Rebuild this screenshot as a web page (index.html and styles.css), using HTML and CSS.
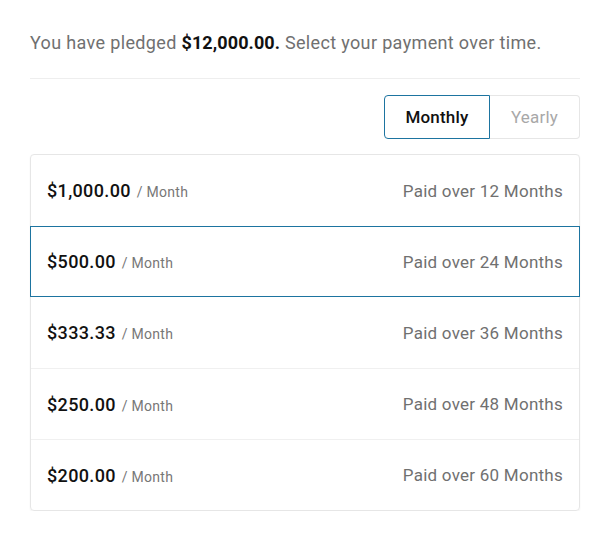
FILE: index.html
```html
<!DOCTYPE html>
<html>
<head>
<meta charset="utf-8">
<link rel="stylesheet" href="styles.css">
</head>
<body>
<div class="page">
  <p class="intro">You have pledged <strong>$12,000.00.</strong> Select your payment over time.</p>
  <hr class="divider">
  <div class="toggle-row">
    <div class="toggle">
      <button class="toggle-btn active">Monthly</button>
      <button class="toggle-btn">Yearly</button>
    </div>
  </div>
  <ul class="plans">
    <li class="plan"><span class="amount">$1,000.00 <span class="unit">/ Month</span></span><span class="term">Paid over 12 Months</span></li>
    <li class="plan selected"><span class="amount">$500.00 <span class="unit">/ Month</span></span><span class="term">Paid over 24 Months</span></li>
    <li class="plan"><span class="amount">$333.33 <span class="unit">/ Month</span></span><span class="term">Paid over 36 Months</span></li>
    <li class="plan"><span class="amount">$250.00 <span class="unit">/ Month</span></span><span class="term">Paid over 48 Months</span></li>
    <li class="plan"><span class="amount">$200.00 <span class="unit">/ Month</span></span><span class="term">Paid over 60 Months</span></li>
  </ul>
</div>
</body>
</html>
```
FILE: styles.css
```css
* { box-sizing: border-box; }
body {
  margin: 0;
  background: #fff;
  font-family: Roboto, "Noto Sans", Arial, sans-serif;
  color: #111;
}
.page {
  padding: 31px 29px 0 30px;
}
.intro {
  margin: 0;
  font-size: 18px;
  line-height: 24px;
  letter-spacing: 0.35px;
  color: #707070;
}
.intro strong {
  color: #111;
  font-weight: 700;
  letter-spacing: 0.1px;
}
.divider {
  border: 0;
  border-top: 1px solid #eeeeee;
  margin: 23px 0 16px;
}
.toggle-row {
  display: flex;
  justify-content: flex-end;
}
.toggle {
  display: flex;
  height: 44px;
}
.toggle-btn {
  display: flex;
  align-items: center;
  justify-content: center;
  font-family: inherit;
  font-size: 17px;
  letter-spacing: 0.2px;
  background: #fff;
  color: #a8a8a8;
  padding: 0;
  margin: 0;
  height: 44px;
  cursor: pointer;
  border: 1px solid #e6e6e6;
  border-left: 0;
  border-radius: 0 4px 4px 0;
  width: 90px;
}
.toggle-btn.active {
  width: 106px;
  border: 1px solid #1d74a0;
  border-radius: 4px 0 0 4px;
  color: #111;
  font-weight: 500;
}
.plans {
  list-style: none;
  margin: 15px 0 0;
  padding: 0;
  border: 1px solid #e6e6e6;
  border-radius: 4px;
  box-shadow: 0 1px 2px rgba(0,0,0,0.06);
}
.plan {
  display: flex;
  justify-content: space-between;
  align-items: center;
  height: 71px;
  padding: 0 16px;
  border-top: 1px solid #f0f0f0;
}
.plan:first-child { border-top: 0; }
.plan.selected {
  border: 1px solid #1d74a0;
  margin: 0 -1px;
  height: 71px;
  padding: 0 16px;
}
.plan.selected + .plan { border-top: 0; }
.amount {
  font-size: 18px;
  font-weight: 500;
  letter-spacing: 0.35px;
  color: #111;
}
.unit {
  font-size: 14px;
  font-weight: 400;
  letter-spacing: 0.3px;
  color: #777;
  margin-left: 1px;
}
.term {
  font-size: 17px;
  letter-spacing: 0.25px;
  color: #707070;
}
```
